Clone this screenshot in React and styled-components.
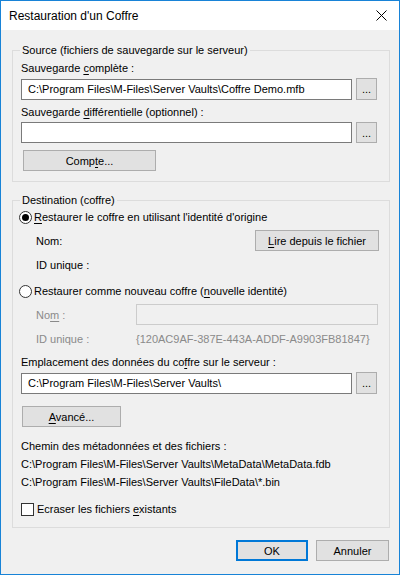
import React from 'react';
import styled, { createGlobalStyle } from 'styled-components';

const Global = createGlobalStyle`
  html, body {
    margin: 0;
    padding: 0;
    background: #f0f0f0;
  }
  * {
    box-sizing: border-box;
  }
`;

const Window = styled.div`
  width: 400px;
  height: 575px;
  border: 1px solid #1883d7;
  background: #f0f0f0;
  font-family: "Liberation Sans", Arial, sans-serif;
  font-size: 11px;
  color: #000;
  display: flex;
  flex-direction: column;
`;

const TitleBar = styled.div`
  height: 29px;
  flex: none;
  background: #fff;
  display: flex;
  align-items: center;
  justify-content: space-between;
  padding: 0 12px 0 8px;
`;

const Title = styled.span`
  font-size: 12px;
  line-height: 16px;
`;

const Body = styled.div`
  flex: 1;
  padding: 12px 9px 0 11px;
  display: flex;
  flex-direction: column;
`;

const Group = styled.fieldset`
  margin: ${p => p.$top || 0}px 0 0 0;
  padding: 0 8px ${p => p.$bottom || 9}px 8px;
  border: 1px solid #dcdcdc;
  min-width: 0;
`;

const Legend = styled.legend`
  padding: 0 2px;
  margin-left: -1px;
  line-height: 16px;
  height: 16px;
`;

const Label = styled.div`
  line-height: 16px;
  height: 16px;
  margin-top: ${p => p.$top || 0}px;
  color: ${p => (p.$disabled ? '#8a8a8a' : '#000')};
  white-space: nowrap;
`;

const Key = styled.span`
  text-decoration: underline;
  text-underline-offset: 2px;
`;

const FieldRow = styled.div`
  display: flex;
  align-items: center;
  gap: 4px;
  margin-top: ${p => p.$top || 0}px;
`;

const TextBox = styled.div`
  width: 331px;
  height: 21px;
  border: 1px solid #7a7a7a;
  background: #fff;
  padding: 0 6px;
  line-height: 19px;
  white-space: nowrap;
  overflow: hidden;
`;

const DisabledBox = styled.div`
  width: 242px;
  height: 21px;
  border: 1px solid #cccccc;
  background: #f0f0f0;
`;

const Button = styled.button`
  font: inherit;
  color: #000;
  width: ${p => p.$w}px;
  height: ${p => p.$h || 21}px;
  background: #e1e1e1;
  border: ${p => (p.$default ? '2px solid #0078d7' : '1px solid #adadad')};
  padding: 0;
  margin: 0;
  margin-left: ${p => p.$left || 0}px;
  margin-top: ${p => p.$top || 0}px;
  line-height: 16px;
  flex: none;
  display: block;
`;

const OptionRow = styled.div`
  display: flex;
  align-items: center;
  height: 16px;
  margin-top: ${p => p.$top || 0}px;
  margin-left: ${p => p.$left || 0}px;
  white-space: nowrap;
`;

const Radio = styled.span`
  width: 13px;
  height: 13px;
  border-radius: 50%;
  border: 1px solid #333;
  background: #fff;
  margin-right: 2px;
  display: flex;
  align-items: center;
  justify-content: center;
  flex: none;

  &::after {
    content: '';
    width: 7px;
    height: 7px;
    border-radius: 50%;
    background: ${p => (p.$checked ? '#000' : 'transparent')};
  }
`;

const Check = styled.span`
  width: 13px;
  height: 13px;
  border: 1px solid #333;
  background: #fff;
  margin-right: 3px;
  flex: none;
`;

const IdentityRow = styled.div`
  display: flex;
  align-items: center;
  justify-content: space-between;
  height: 21px;
  margin-top: ${p => p.$top || 0}px;
  padding-left: 15px;
  padding-right: 2px;
`;

const SubRow = styled.div`
  display: flex;
  align-items: center;
  height: ${p => p.$h || 16}px;
  margin-top: ${p => p.$top || 0}px;
  padding-left: 15px;
  white-space: nowrap;
  color: ${p => (p.$disabled ? '#8a8a8a' : '#000')};
`;

const SubLabel = styled.span`
  width: 100px;
  flex: none;
  line-height: 16px;
`;

const Footer = styled.div`
  display: flex;
  justify-content: flex-end;
  gap: 8px;
  padding: 12px 1px 0 0;
`;

const CloseIcon = () => (
  <svg width="11" height="11" viewBox="0 0 11 11">
    <path d="M0.5 0.5L10.5 10.5M10.5 0.5L0.5 10.5" stroke="#000" strokeWidth="1" fill="none" />
  </svg>
);

export default function App() {
  return (
    <>
      <Global />
      <Window>
        <TitleBar>
          <Title>Restauration d'un Coffre</Title>
          <CloseIcon />
        </TitleBar>
        <Body>
          <Group $bottom={10}>
            <Legend>Source (fichiers de sauvegarde sur le serveur)</Legend>
            <Label $top={2}>Sauvegarde <Key>c</Key>omplète :</Label>
            <FieldRow $top={2}>
              <TextBox>C:\Program Files\M-Files\Server Vaults\Coffre Demo.mfb</TextBox>
              <Button $w={21} $h={22}>...</Button>
            </FieldRow>
            <Label $top={4}>Sauvegarde <Key>d</Key>ifférentielle (optionnel) :</Label>
            <FieldRow $top={2}>
              <TextBox />
              <Button $w={21} $h={21}>...</Button>
            </FieldRow>
            <Button $w={133} $left={2} $top={7}>Comp<Key>t</Key>e...</Button>
          </Group>

          <Group $top={10} $bottom={10}>
            <Legend>Destination (coffre)</Legend>
            <OptionRow $top={1} $left={-2}>
              <Radio $checked />
              <span><Key>R</Key>estaurer le coffre en utilisant l'identité d'origine</span>
            </OptionRow>
            <IdentityRow $top={5}>
              <span>Nom:</span>
              <Button $w={124}><Key>L</Key>ire depuis le fichier</Button>
            </IdentityRow>
            <SubRow $top={6}>ID unique :</SubRow>
            <OptionRow $top={10} $left={-2}>
              <Radio />
              <span>Restaurer comme nouveau coffre (<Key>n</Key>ouvelle identité)</span>
            </OptionRow>
            <SubRow $top={5} $h={21} $disabled>
              <SubLabel>No<Key>m</Key> :</SubLabel>
              <DisabledBox />
            </SubRow>
            <SubRow $top={6} $disabled>
              <SubLabel>ID unique :</SubLabel>
              <span>{'{120AC9AF-387E-443A-ADDF-A9903FB81847}'}</span>
            </SubRow>
            <Label $top={7}>Emplacement des données du co<Key>f</Key>fre sur le serveur :</Label>
            <FieldRow $top={2}>
              <TextBox>C:\Program Files\M-Files\Server Vaults\</TextBox>
              <Button $w={21} $h={22}>...</Button>
            </FieldRow>
            <Button $w={99} $left={1} $top={12}><Key>A</Key>vancé...</Button>
            <Label $top={11}>Chemin des métadonnées et des fichiers :</Label>
            <Label $top={2}>C:\Program Files\M-Files\Server Vaults\MetaData\MetaData.fdb</Label>
            <Label $top={2}>C:\Program Files\M-Files\Server Vaults\FileData\*.bin</Label>
            <OptionRow $top={11}>
              <Check />
              <span>Ecraser les fichiers <Key>e</Key>xistants</span>
            </OptionRow>
          </Group>

          <Footer>
            <Button $w={72} $default>OK</Button>
            <Button $w={73}>Annuler</Button>
          </Footer>
        </Body>
      </Window>
    </>
  );
}
